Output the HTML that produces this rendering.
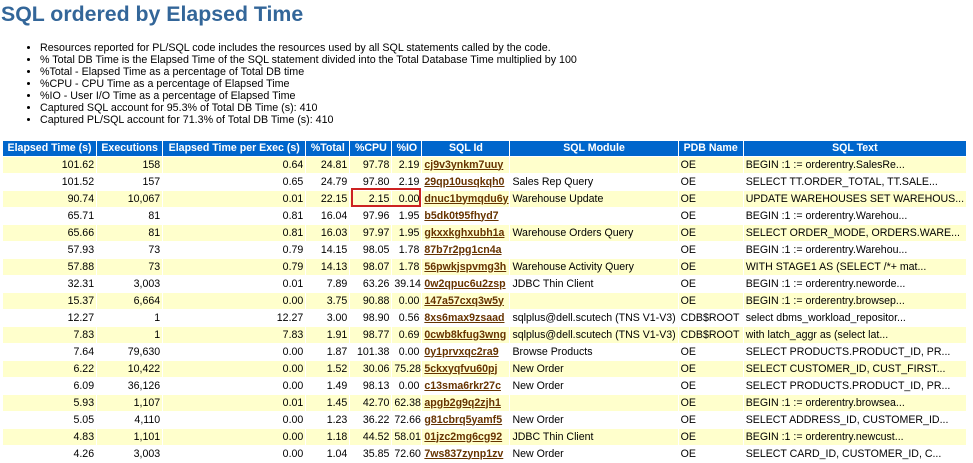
<!DOCTYPE html>
<html><head><style>
body{margin:0;background:#fff;font-family:"Liberation Sans",Arial,sans-serif;width:973px;height:452px;overflow:hidden;position:relative}
h1{position:absolute;left:1px;top:0;margin:0;font-size:21.3px;line-height:28px;color:#336699;font-weight:bold}
ul{position:absolute;left:0;top:42px;margin:0;padding:0 0 0 40px;font-size:10.7px;line-height:12px;color:#000}
li{list-style:disc}
table{position:absolute;left:2px;top:140px;border-collapse:separate;border-spacing:1px;font-size:10.6px;table-layout:fixed;width:965px}
th{background:#0066cc;color:#fff;font-weight:bold;height:15px;line-height:15px;padding:0 2px;white-space:nowrap;overflow:hidden;text-align:center}
td{height:16px;line-height:15px;padding:0 2px;white-space:nowrap;overflow:hidden;text-align:right;color:#000}
tr.o td{background:#ffffcc}
td.l{text-align:left}
a{color:#663300;font-weight:bold;text-decoration:underline}
.box{position:absolute;left:351px;top:188px;width:70px;height:19px;border:2px solid #cc2222;box-sizing:border-box}
</style></head><body>
<h1>SQL ordered by Elapsed Time</h1>
<ul>
<li>Resources reported for PL/SQL code includes the resources used by all SQL statements called by the code.</li>
<li>% Total DB Time is the Elapsed Time of the SQL statement divided into the Total Database Time multiplied by 100</li>
<li>%Total - Elapsed Time as a percentage of Total DB time</li>
<li>%CPU - CPU Time as a percentage of Elapsed Time</li>
<li>%IO - User I/O Time as a percentage of Elapsed Time</li>
<li>Captured SQL account for 95.3% of Total DB Time (s): 410</li>
<li>Captured PL/SQL account for 71.3% of Total DB Time (s): 410</li>
</ul>
<table>
<colgroup><col style="width:93px"><col style="width:65px"><col style="width:142px"><col style="width:43px"><col style="width:41px"><col style="width:29px"><col style="width:87px"><col style="width:167px"><col style="width:64px"><col style="width:222px"></colgroup>
<tr><th>Elapsed Time (s)</th><th>Executions</th><th>Elapsed Time per Exec (s)</th><th>%Total</th><th>%CPU</th><th>%IO</th><th>SQL Id</th><th>SQL Module</th><th>PDB Name</th><th>SQL Text</th></tr>
<tr class="o"><td>101.62</td><td>158</td><td>0.64</td><td>24.81</td><td>97.78</td><td>2.19</td><td class="l"><a>cj9v3ynkm7uuy</a></td><td class="l"></td><td class="l">OE</td><td class="l">BEGIN :1 := orderentry.SalesRe...</td></tr>
<tr><td>101.52</td><td>157</td><td>0.65</td><td>24.79</td><td>97.80</td><td>2.19</td><td class="l"><a>29qp10usqkqh0</a></td><td class="l">Sales Rep Query</td><td class="l">OE</td><td class="l">SELECT TT.ORDER_TOTAL, TT.SALE...</td></tr>
<tr class="o"><td>90.74</td><td>10,067</td><td>0.01</td><td>22.15</td><td>2.15</td><td>0.00</td><td class="l"><a>dnuc1bymqdu6y</a></td><td class="l">Warehouse Update</td><td class="l">OE</td><td class="l">UPDATE WAREHOUSES SET WAREHOUS...</td></tr>
<tr><td>65.71</td><td>81</td><td>0.81</td><td>16.04</td><td>97.96</td><td>1.95</td><td class="l"><a>b5dk0t95fhyd7</a></td><td class="l"></td><td class="l">OE</td><td class="l">BEGIN :1 := orderentry.Warehou...</td></tr>
<tr class="o"><td>65.66</td><td>81</td><td>0.81</td><td>16.03</td><td>97.97</td><td>1.95</td><td class="l"><a>gkxxkghxubh1a</a></td><td class="l">Warehouse Orders Query</td><td class="l">OE</td><td class="l">SELECT ORDER_MODE, ORDERS.WARE...</td></tr>
<tr><td>57.93</td><td>73</td><td>0.79</td><td>14.15</td><td>98.05</td><td>1.78</td><td class="l"><a>87b7r2pg1cn4a</a></td><td class="l"></td><td class="l">OE</td><td class="l">BEGIN :1 := orderentry.Warehou...</td></tr>
<tr class="o"><td>57.88</td><td>73</td><td>0.79</td><td>14.13</td><td>98.07</td><td>1.78</td><td class="l"><a>56pwkjspvmg3h</a></td><td class="l">Warehouse Activity Query</td><td class="l">OE</td><td class="l">WITH STAGE1 AS (SELECT /*+ mat...</td></tr>
<tr><td>32.31</td><td>3,003</td><td>0.01</td><td>7.89</td><td>63.26</td><td>39.14</td><td class="l"><a>0w2qpuc6u2zsp</a></td><td class="l">JDBC Thin Client</td><td class="l">OE</td><td class="l">BEGIN :1 := orderentry.neworde...</td></tr>
<tr class="o"><td>15.37</td><td>6,664</td><td>0.00</td><td>3.75</td><td>90.88</td><td>0.00</td><td class="l"><a>147a57cxq3w5y</a></td><td class="l"></td><td class="l">OE</td><td class="l">BEGIN :1 := orderentry.browsep...</td></tr>
<tr><td>12.27</td><td>1</td><td>12.27</td><td>3.00</td><td>98.90</td><td>0.56</td><td class="l"><a>8xs6max9zsaad</a></td><td class="l">sqlplus@dell.scutech (TNS V1-V3)</td><td class="l">CDB$ROOT</td><td class="l">select dbms_workload_repositor...</td></tr>
<tr class="o"><td>7.83</td><td>1</td><td>7.83</td><td>1.91</td><td>98.77</td><td>0.69</td><td class="l"><a>0cwb8kfug3wng</a></td><td class="l">sqlplus@dell.scutech (TNS V1-V3)</td><td class="l">CDB$ROOT</td><td class="l">with latch_aggr as (select lat...</td></tr>
<tr><td>7.64</td><td>79,630</td><td>0.00</td><td>1.87</td><td>101.38</td><td>0.00</td><td class="l"><a>0y1prvxqc2ra9</a></td><td class="l">Browse Products</td><td class="l">OE</td><td class="l">SELECT PRODUCTS.PRODUCT_ID, PR...</td></tr>
<tr class="o"><td>6.22</td><td>10,422</td><td>0.00</td><td>1.52</td><td>30.06</td><td>75.28</td><td class="l"><a>5ckxyqfvu60pj</a></td><td class="l">New Order</td><td class="l">OE</td><td class="l">SELECT CUSTOMER_ID, CUST_FIRST...</td></tr>
<tr><td>6.09</td><td>36,126</td><td>0.00</td><td>1.49</td><td>98.13</td><td>0.00</td><td class="l"><a>c13sma6rkr27c</a></td><td class="l">New Order</td><td class="l">OE</td><td class="l">SELECT PRODUCTS.PRODUCT_ID, PR...</td></tr>
<tr class="o"><td>5.93</td><td>1,107</td><td>0.01</td><td>1.45</td><td>42.70</td><td>62.38</td><td class="l"><a>apgb2g9q2zjh1</a></td><td class="l"></td><td class="l">OE</td><td class="l">BEGIN :1 := orderentry.browsea...</td></tr>
<tr><td>5.05</td><td>4,110</td><td>0.00</td><td>1.23</td><td>36.22</td><td>72.66</td><td class="l"><a>g81cbrq5yamf5</a></td><td class="l">New Order</td><td class="l">OE</td><td class="l">SELECT ADDRESS_ID, CUSTOMER_ID...</td></tr>
<tr class="o"><td>4.83</td><td>1,101</td><td>0.00</td><td>1.18</td><td>44.52</td><td>58.01</td><td class="l"><a>01jzc2mg6cg92</a></td><td class="l">JDBC Thin Client</td><td class="l">OE</td><td class="l">BEGIN :1 := orderentry.newcust...</td></tr>
<tr><td>4.26</td><td>3,003</td><td>0.00</td><td>1.04</td><td>35.85</td><td>72.60</td><td class="l"><a>7ws837zynp1zv</a></td><td class="l">New Order</td><td class="l">OE</td><td class="l">SELECT CARD_ID, CUSTOMER_ID, C...</td></tr>
</table>
<div class="box"></div>
</body></html>
